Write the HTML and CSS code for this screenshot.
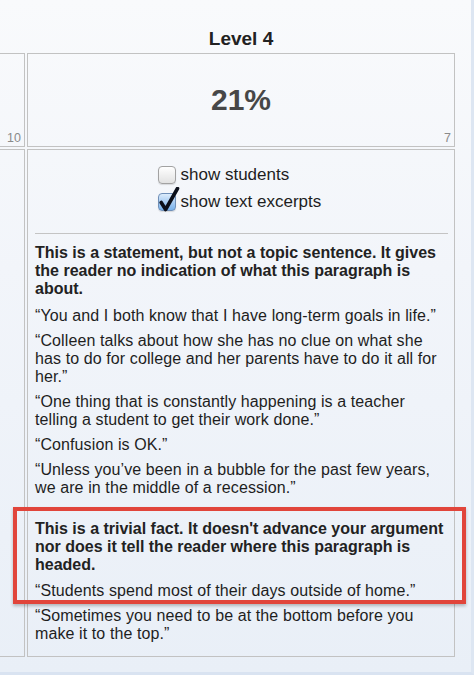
FILE: index.html
```html
<!DOCTYPE html>
<html lang="en">
<head>
    <meta charset="UTF-8">
    <meta name="viewport" content="width=device-width, initial-scale=1.0">
    <title>Level 4</title>
    <link rel="stylesheet" href="styles.css">
</head>
<body>

<div class="panel">
    <div class="levels">
        <div class="level-head"></div>
        <div class="level-head">Level 4</div>

        <div class="score-cell">
            <div class="count">10</div>
        </div>
        <div class="score-cell">
            <div class="percent">21%</div>
            <div class="count">7</div>
        </div>

        <div class="detail-cell"></div>
        <div class="detail-cell">
            <div class="options">
                <label class="option">
                    <span class="box"></span>
                    show students
                </label>
                <label class="option">
                    <span class="box checked">
                        <svg class="tick" width="22" height="26" viewBox="0 0 22 26">
                            <path d="M3.2 15.5 L7.6 22.5 L19.5 1.5" fill="none" stroke="#0b0f1a" stroke-width="3.6" stroke-linecap="round" stroke-linejoin="round"/>
                        </svg>
                    </span>
                    show text excerpts
                </label>
            </div>

            <hr class="divider">

            <div class="group">
                <p class="comment">This is a statement, but not a topic sentence. It gives the reader no indication of what this paragraph is about.</p>
                <p>&ldquo;You and I both know that I have long-term goals in life.&rdquo;</p>
                <p>&ldquo;Colleen talks about how she has no clue on what she has to do for college and her parents have to do it all for her.&rdquo;</p>
                <p>&ldquo;One thing that is constantly happening is a teacher telling a student to get their work done.&rdquo;</p>
                <p>&ldquo;Confusion is OK.&rdquo;</p>
                <p>&ldquo;Unless you&rsquo;ve been in a bubble for the past few years, we are in the middle of a recession.&rdquo;</p>
            </div>

            <div class="group">
                <p class="comment">This is a trivial fact. It doesn't advance your argument nor does it tell the reader where this paragraph is headed.</p>
                <p>&ldquo;Students spend most of their days outside of home.&rdquo;</p>
                <p>&ldquo;Sometimes you need to be at the bottom before you make it to the top.&rdquo;</p>
            </div>
        </div>
    </div>

    <!-- annotation drawn over the screenshot -->
    <div class="highlight"></div>
</div>

</body>
</html>
```

FILE: styles.css
```css
body {
    margin: 0;
    font-family: "Liberation Sans", Arial, sans-serif;
    color: #222;
    background: #dfe7f2;
}

.panel {
    position: relative;
    width: 471px;
    height: 672px;
    overflow: hidden;
    border-right: 3px solid #dde6f2;
    border-bottom: 3px solid #d9e3f1;
    background: linear-gradient(to bottom, #f9fafc 0%, #f2f5fa 40%, #e9eff7 100%);
}

.levels {
    display: grid;
    grid-template-columns: 100px 428px;
    grid-template-rows: 51px 94px auto;
    gap: 2px;
    margin-left: -75px;
}

.level-head {
    box-sizing: border-box;
    padding-top: 28px;
    text-align: center;
    font-size: 19px;
    font-weight: bold;
    color: #222;
}

.score-cell {
    box-sizing: border-box;
    border: 1px solid #c2c2c2;
    display: flex;
    flex-direction: column;
    align-items: center;
    padding: 0 3px 1px;
}

.percent {
    margin-top: 29px;
    font-size: 30px;
    font-weight: bold;
    color: #474747;
}

.count {
    margin-top: auto;
    align-self: flex-end;
    font-size: 12.5px;
    line-height: 14px;
    color: #8a8a8a;
}

.detail-cell {
    box-sizing: border-box;
    border: 1px solid #c2c2c2;
    padding: 11px 6px 13px 7px;
}

.options {
    text-align: center;
}

.option {
    display: flex;
    align-items: center;
    width: 170px;
    margin: 0 auto;
    height: 27px;
    font-size: 17px;
    color: #1e1e1e;
    text-align: left;
}

.box {
    position: relative;
    box-sizing: border-box;
    width: 18px;
    height: 18px;
    margin: 0 5px 0 1px;
    border: 1px solid #a2a2a2;
    border-radius: 4px;
    background: linear-gradient(to bottom, #ffffff 0%, #f0f0f0 50%, #e2e2e2 100%);
    box-shadow: 0 1px 1px rgba(0, 0, 0, 0.12);
    flex: none;
}

.box.checked {
    border-color: #6f8fb8;
    background: linear-gradient(to bottom, #dcecfb 0%, #a9cdf3 50%, #78b2ec 100%);
}

.tick {
    position: absolute;
    left: -1px;
    top: -7px;
}

.divider {
    border: none;
    border-top: 1px solid #c4c4c4;
    margin: 18px 0 10px;
}

.group {
    margin-bottom: 23px;
}

.group:last-child {
    margin-bottom: 0;
}

.group p {
    margin: 0 0 7px;
    font-size: 16px;
    line-height: 18px;
    letter-spacing: 0.1px;
    color: #1e1e1e;
}

.group p.comment {
    margin-bottom: 8.5px;
    font-weight: bold;
    letter-spacing: 0;
    color: #222;
}

.group p:last-child {
    margin-bottom: 0;
}

.highlight {
    position: absolute;
    left: 13px;
    top: 507px;
    width: 453px;
    height: 97px;
    box-sizing: border-box;
    border: 4px solid #e1453b;
    box-shadow: 0 2px 3px rgba(0, 0, 0, 0.25);
}
```
